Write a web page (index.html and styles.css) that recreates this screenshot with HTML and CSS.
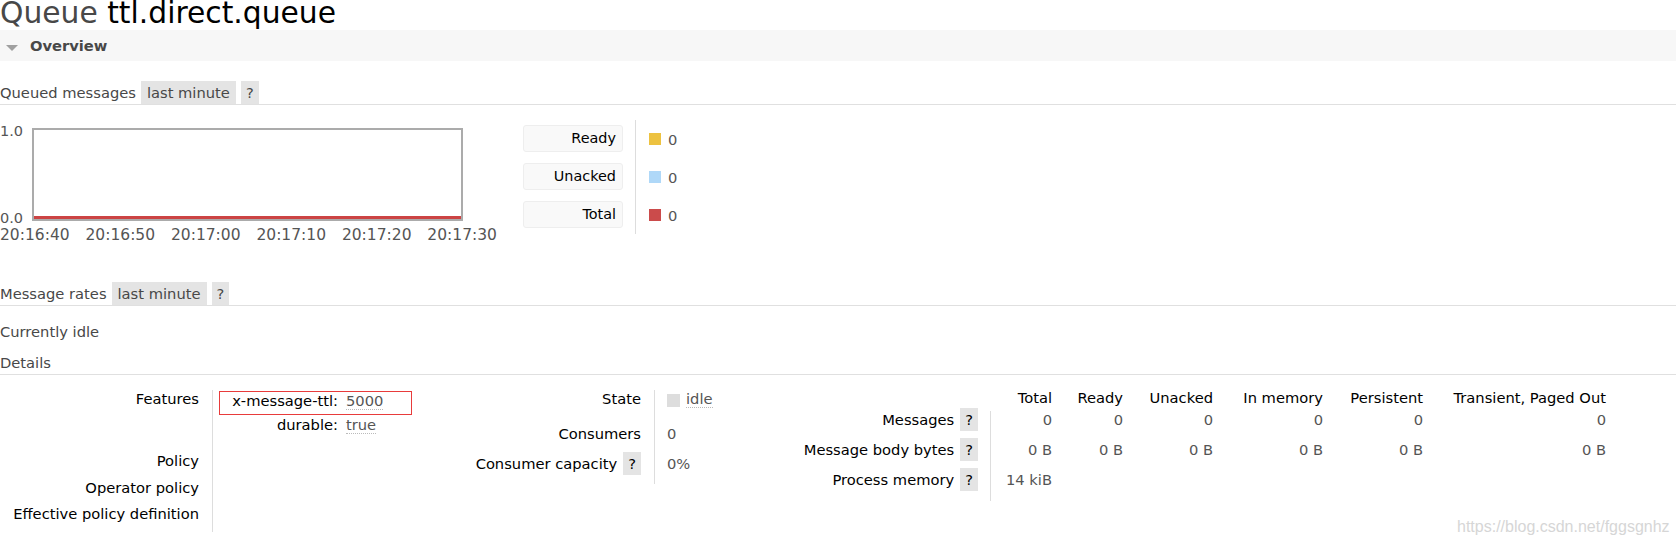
FILE: index.html
```html
<!DOCTYPE html>
<html lang="en">
<head>
    <meta charset="UTF-8">
    <meta name="viewport" content="width=device-width, initial-scale=1.0">
    <title>Queue ttl.direct.queue</title>
    <link rel="stylesheet" href="styles.css">
</head>
<body>
    <h1>Queue <b>ttl.direct.queue</b></h1>

    <div class="section-bar">
        <span class="triangle"></span>
        <span>Overview</span>
    </div>

    <h3 class="head head-first">Queued messages <span class="pill">last minute</span><span class="pill pill-help">?</span></h3>

    <div class="chart-row">
        <div class="chart">
            <div class="plot">
                <div class="y-axis"><span>1.0</span><span>0.0</span></div>
                <div class="box"><div class="series"></div></div>
            </div>
            <div class="x-axis">
                <span>20:16:40</span>
                <span>20:16:50</span>
                <span>20:17:00</span>
                <span>20:17:10</span>
                <span>20:17:20</span>
                <span>20:17:30</span>
            </div>
        </div>
        <div class="legend">
            <div class="legend-label"><div class="tag">Ready</div></div>
            <div class="legend-value"><span class="swatch ready"></span>0</div>
            <div class="legend-label"><div class="tag">Unacked</div></div>
            <div class="legend-value"><span class="swatch unacked"></span>0</div>
            <div class="legend-label"><div class="tag">Total</div></div>
            <div class="legend-value"><span class="swatch total"></span>0</div>
        </div>
    </div>

    <h3 class="head head-rates">Message rates <span class="pill">last minute</span><span class="pill pill-help">?</span></h3>

    <p class="idle">Currently idle</p>

    <h3 class="head head-details">Details</h3>

    <div class="details">
        <div class="facts facts-queue">
            <div class="fact-label">Features</div>
            <div class="fact-value">
                <div class="feature marked"><span class="key">x-message-ttl:</span><span class="val">5000</span></div>
                <div class="feature"><span class="key">durable:</span><span class="val">true</span></div>
            </div>
            <div class="fact-label">Policy</div>
            <div class="fact-value"></div>
            <div class="fact-label">Operator policy</div>
            <div class="fact-value"></div>
            <div class="fact-label">Effective policy definition</div>
            <div class="fact-value"></div>
        </div>

        <div class="facts facts-state">
            <div class="fact-label">State</div>
            <div class="fact-value"><span class="state-box"></span><span class="val">idle</span></div>
            <div class="fact-label">Consumers</div>
            <div class="fact-value">0</div>
            <div class="fact-label"><span class="row-label">Consumer capacity <span class="pill pill-help">?</span></span></div>
            <div class="fact-value">0%</div>
        </div>

        <div class="facts facts-stats">
            <div class="stat-head"></div>
            <div class="stat-head">Total</div>
            <div class="stat-head">Ready</div>
            <div class="stat-head">Unacked</div>
            <div class="stat-head">In memory</div>
            <div class="stat-head">Persistent</div>
            <div class="stat-head">Transient, Paged Out</div>

            <div class="stat-label">Messages <span class="pill pill-help">?</span></div>
            <div class="stat first">0</div>
            <div class="stat">0</div>
            <div class="stat">0</div>
            <div class="stat">0</div>
            <div class="stat">0</div>
            <div class="stat">0</div>

            <div class="stat-label">Message body bytes <span class="pill pill-help">?</span></div>
            <div class="stat first">0 B</div>
            <div class="stat">0 B</div>
            <div class="stat">0 B</div>
            <div class="stat">0 B</div>
            <div class="stat">0 B</div>
            <div class="stat">0 B</div>

            <div class="stat-label">Process memory <span class="pill pill-help">?</span></div>
            <div class="stat first">14 kiB</div>
            <div class="stat"></div>
            <div class="stat"></div>
            <div class="stat"></div>
            <div class="stat"></div>
            <div class="stat"></div>
        </div>
    </div>

    <div class="watermark">https://blog.csdn.net/fggsgnhz</div>
</body>
</html>
```

FILE: styles.css
```css
body {
    margin: 0;
    font-family: "DejaVu Sans", Verdana, sans-serif;
    font-size: 14.7px;
    line-height: 17px;
    color: #484848;
    background-color: #fff;
}

h1 {
    margin: 0 0 4px;
    font-size: 29.75px;
    line-height: 26px;
    font-weight: normal;
    color: #484848;
}

h1 b {
    font-weight: normal;
    color: #000;
}

.section-bar {
    display: flex;
    align-items: center;
    gap: 12px;
    height: 31px;
    padding-left: 6px;
    background-color: #f7f7f7;
    font-weight: bold;
    color: #484848;
}

.triangle {
    width: 0;
    height: 0;
    margin-top: 4px;
    border-left: 6px solid transparent;
    border-right: 6px solid transparent;
    border-top: 6px solid #a0a0a0;
}

.head {
    display: flex;
    gap: 5px;
    margin: 0;
    font-size: 14.7px;
    font-weight: normal;
    line-height: 23px;
    border-bottom: 1px solid #e0e0e0;
}

.head-first {
    margin-top: 20px;
}

.head-rates {
    margin-top: 39px;
}

.head-details {
    margin-top: 11.5px;
}

.pill {
    background-color: #e4e4e4;
    padding: 0 6px;
    line-height: 23px;
}

.pill-help {
    padding: 0 5px;
}

/* chart */

.chart-row {
    display: flex;
    margin-top: 15px;
}

.chart {
    width: 497px;
    padding-top: 8px;
}

.plot {
    display: flex;
}

.y-axis {
    width: 32px;
    margin: -5px 0;
    display: flex;
    flex-direction: column;
    justify-content: space-between;
    font-size: 14.5px;
    line-height: 16px;
    color: #555;
}

.box {
    width: 427px;
    height: 89px;
    border: 2px solid #ababab;
    display: flex;
    align-items: flex-end;
}

.series {
    flex: 1;
    height: 3px;
    background-color: #cc4444;
}

.x-axis {
    display: flex;
    justify-content: space-between;
    margin-top: 6px;
    font-size: 15.5px;
    line-height: 16px;
    color: #555;
}

.legend {
    margin-left: 26px;
    display: grid;
    grid-template-columns: auto auto;
    align-content: start;
}

.legend-label {
    padding: 5px 12px 6px 0;
    border-right: 1px solid #ddd;
}

.tag {
    box-sizing: border-box;
    width: 100px;
    height: 27px;
    padding-right: 6px;
    font-size: 14.4px;
    line-height: 25px;
    text-align: right;
    color: #000;
    background-color: #f9f9f9;
    border: 1px solid #eee;
    border-radius: 3px;
}

.legend-value {
    display: flex;
    align-items: center;
    gap: 7px;
    padding-left: 13px;
    color: #555;
}

.swatch {
    width: 12px;
    height: 12px;
}

.ready { background-color: #edc240; }
.unacked { background-color: #afd8f8; }
.total { background-color: #cb4b4b; }

.idle {
    margin: 16.5px 0 0;
}

/* details */

.details {
    display: flex;
    align-items: flex-start;
    padding-top: 15px;
}

.facts {
    display: grid;
}

.facts-queue {
    width: 440px;
    grid-template-columns: 212px auto;
    grid-template-rows: 62px 27px 26px 27px;
}

.facts-state {
    width: 260px;
    grid-template-columns: 214px auto;
    grid-template-rows: 35px 30px 29px;
}

.facts-stats {
    margin-top: -1.5px;
    grid-template-columns: 290px 62px 71px 90px 110px 100px 183px;
    grid-template-rows: 22.5px 30px 30px 30px;
}

.fact-label {
    box-sizing: border-box;
    padding-right: 13px;
    text-align: right;
    color: #000;
}

.facts-queue .fact-value {
    border-left: 1px solid #ddd;
    padding-left: 6px;
}

.facts-state .fact-value {
    display: flex;
    align-items: flex-start;
    border-left: 1px solid #ddd;
    padding-left: 12px;
    color: #555;
}

.feature {
    display: grid;
    grid-template-columns: 118px auto;
    column-gap: 8px;
    width: 191px;
    border: 1px solid transparent;
}

.feature.marked {
    margin-top: 1px;
    padding-bottom: 4px;
    border-color: #e83b3b;
}

.key {
    text-align: right;
    color: #000;
}

.val {
    justify-self: start;
    color: #555;
    border-bottom: 1px dotted #bbb;
}

.state-box {
    width: 13px;
    height: 13px;
    margin: 4px 6px 0 0;
    background-color: #ddd;
}

.row-label,
.stat-label {
    display: flex;
    align-items: center;
    justify-content: flex-end;
    gap: 6px;
    height: 17px;
}

.stat-label {
    padding-right: 12px;
    color: #000;
}

.stat-label .pill-help,
.row-label .pill-help {
    line-height: 23px;
}

.stat-head {
    text-align: right;
    color: #000;
}

.stat {
    text-align: right;
    color: #555;
}

.stat.first {
    border-left: 1px solid #ddd;
}

.watermark {
    position: absolute;
    left: 1457px;
    top: 517px;
    font-family: "Liberation Sans", Arial, sans-serif;
    font-size: 16px;
    line-height: 20px;
    color: #d6d6d6;
}
```
